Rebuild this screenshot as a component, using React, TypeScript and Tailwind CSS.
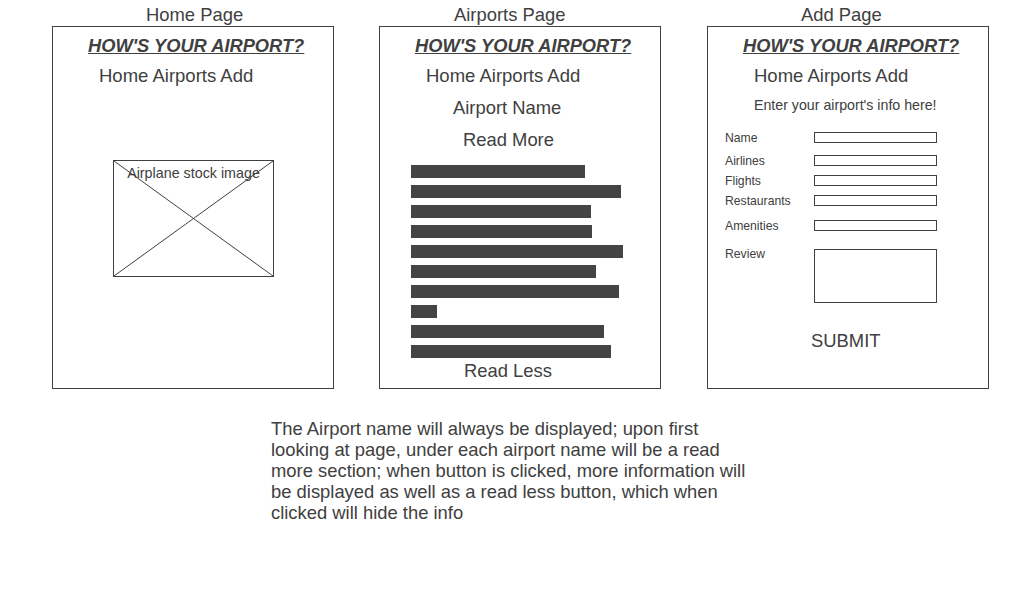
const bars = [174, 210, 180, 181, 212, 185, 208, 26, 193, 200];

const fields = [
  { label: "Name", mt: "mt-[18px]" },
  { label: "Airlines", mt: "mt-[12px]" },
  { label: "Flights", mt: "mt-[9px]" },
  { label: "Restaurants", mt: "mt-[9px]" },
  { label: "Amenities", mt: "mt-[14px]" },
];

function Header() {
  return (
    <>
      <h1 className="mt-[8px] pl-[35px] text-[18.3px] leading-[21px] font-bold italic underline">
        HOW'S YOUR AIRPORT?
      </h1>
      <nav className="mt-[9px] pl-[46px] text-[18.5px] leading-[21px]">Home Airports Add</nav>
    </>
  );
}

function Column({ title, className, titleOffset, children }: { title: string; className?: string; titleOffset: string; children: React.ReactNode }) {
  return (
    <div className={`flex w-[282px] flex-col ${className ?? ""}`}>
      <div className={`h-[26px] overflow-hidden pt-[4px] text-[18.4px] leading-[21px] ${titleOffset}`}>{title}</div>
      <div className="flex h-[363px] flex-col border border-[#404040]">{children}</div>
    </div>
  );
}

export default function App() {
  return (
    <div className="h-[600px] w-[1024px] bg-white text-[#404040]" style={{ fontFamily: '"Liberation Sans", Arial, sans-serif' }}>
      <div className="flex gap-[45px] pl-[52px]">
        <Column title="Home Page" titleOffset="pl-[94px]">
          <Header />
          <div className="relative mt-[74px] ml-[60px] h-[117px] w-[161px] border border-[#404040]">
            <svg className="absolute inset-0" width="159" height="115" viewBox="0 0 159 115">
              <line x1="0" y1="0" x2="159" y2="115" stroke="#404040" strokeWidth="1" />
              <line x1="159" y1="0" x2="0" y2="115" stroke="#404040" strokeWidth="1" />
            </svg>
            <div className="relative mt-[4px] text-center text-[14.3px] leading-[17px]">Airplane stock image</div>
          </div>
        </Column>

        <Column title="Airports Page" titleOffset="pl-[75px]">
          <Header />
          <div className="mt-[11px] pl-[73px] text-[18.4px] leading-[21px]">Airport Name</div>
          <div className="mt-[11px] pl-[83px] text-[18.4px] leading-[21px]">Read More</div>
          <div className="mt-[15px] flex flex-col gap-[7px] pl-[31px]">
            {bars.map((w, i) => (
              <div key={i} className="h-[13px] bg-[#444444]" style={{ width: w }} />
            ))}
          </div>
          <div className="mt-[2px] pl-[84px] text-[18.4px] leading-[21px]">Read Less</div>
        </Column>

        <Column title="Add Page" className="ml-px" titleOffset="pl-[94px]">
          <Header />
          <div className="mt-[11px] pl-[46px] text-[14.2px] leading-[17px]">Enter your airport's info here!</div>
          {fields.map((f) => (
            <div key={f.label} className={`flex h-[11px] items-center pl-[17px] ${f.mt}`}>
              <span className="w-[89px] text-[12.2px] leading-[14px]">{f.label}</span>
              <div className="h-[11px] w-[123px] border border-[#404040]" />
            </div>
          ))}
          <div className="mt-[18px] flex pl-[17px]">
            <span className="-mt-[2px] w-[89px] text-[12.2px] leading-[14px]">Review</span>
            <div className="h-[54px] w-[123px] border border-[#404040]" />
          </div>
          <div className="mt-[27px] pl-[103px] text-[18.4px] leading-[21px]">SUBMIT</div>
        </Column>
      </div>

      <p className="mt-[29px] ml-[271px] w-[484px] text-[18.4px] leading-[21px]">
        The Airport name will always be displayed; upon first looking at page, under each airport name will be a read
        more section; when button is clicked, more information will be displayed as well as a read less button, which
        when clicked will hide the info
      </p>
    </div>
  );
}
